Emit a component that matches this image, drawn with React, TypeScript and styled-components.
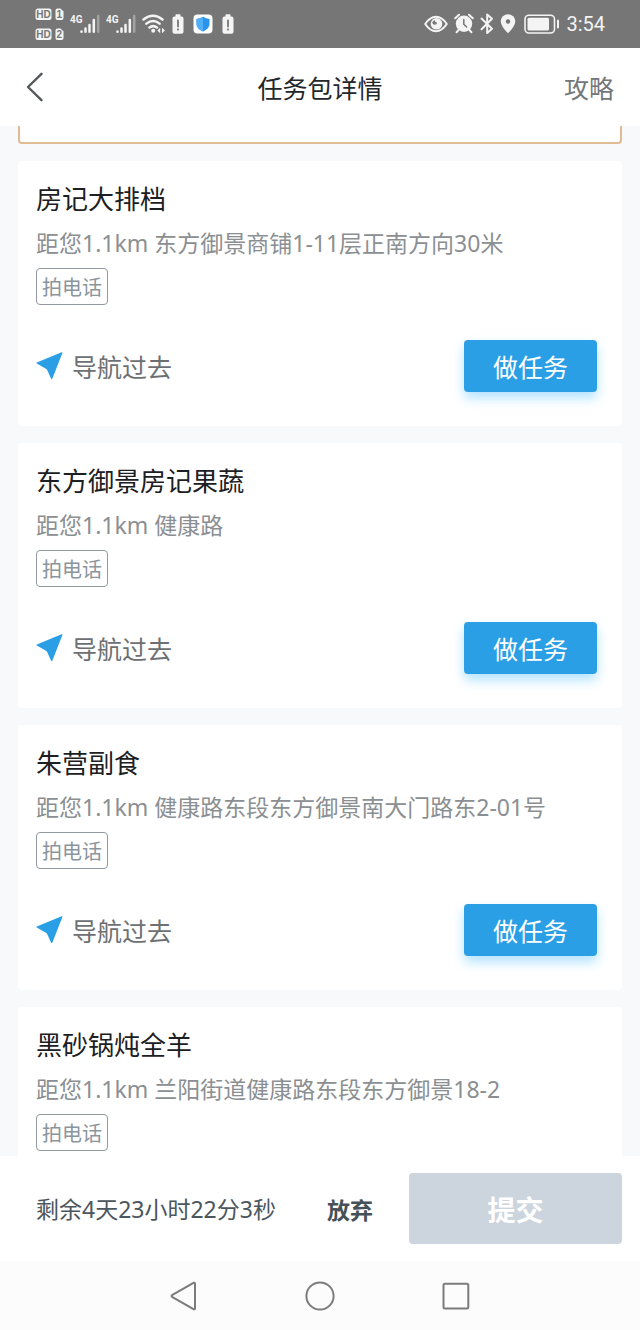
import React from "react";
import styled, { createGlobalStyle } from "styled-components";

const GlobalStyle = createGlobalStyle`
  *, *::before, *::after { box-sizing: border-box; }
  body {
    margin: 0;
    background: #f7f9fb;
    font-family: "Noto Sans CJK SC", sans-serif;
  }
  button {
    margin: 0;
    padding: 0;
    border: 0;
    background: none;
    font-family: inherit;
    cursor: pointer;
  }
  h1, h2, p { margin: 0; font-weight: 400; }
`;

const Screen = styled.div`
  display: flex;
  flex-direction: column;
  height: 100vh;
  background: #f7f9fb;
`;

const StatusBar = styled.div`
  display: flex;
  justify-content: space-between;
  flex: none;
  height: 48px;
  padding: 0 35px;
  background: #767676;
  color: #f4f4f4;
`;

const StatusGroup = styled.div`
  display: flex;
  align-items: center;
  gap: 6px;
`;

const Clock = styled.time`
  font-family: Roboto, sans-serif;
  font-size: 20px;
  line-height: 24px;
`;

const Header = styled.header`
  display: grid;
  grid-template-columns: 1fr auto 1fr;
  align-items: center;
  flex: none;
  height: 78px;
  padding: 0 26px;
  background: #fff;
`;

const BackButton = styled.button`
  display: flex;
  justify-self: start;
`;

const PageTitle = styled.h1`
  font-size: 25px;
  line-height: 36px;
  color: #23272a;
`;

const GuideLink = styled.a`
  justify-self: end;
  font-size: 25px;
  line-height: 36px;
  color: #73777a;
  text-decoration: none;
`;

const TaskList = styled.main`
  display: flex;
  flex-direction: column;
  gap: 17px;
  flex: 1;
  min-height: 0;
  padding: 0 18px;
  overflow-y: auto;
  scrollbar-width: none;
`;

const PackageSummary = styled.div`
  flex: none;
  height: 18px;
  border: 2px solid #dfbc93;
  border-top: 0;
  border-radius: 0 0 4px 4px;
  background: #fff;
`;

const Card = styled.article`
  display: flex;
  flex-direction: column;
  align-items: flex-start;
  flex: none;
  min-height: 265px;
  padding: 19px 25px 34px 18px;
  border-radius: 4px;
  background: #fff;
`;

const ShopName = styled.h2`
  font-size: 26px;
  line-height: 36px;
  color: #1c2023;
`;

const Address = styled.p`
  margin-top: 12px;
  font-family: "Noto Sans", "Noto Sans CJK SC", sans-serif;
  font-size: 23px;
  line-height: 30px;
  color: #8b8f92;
`;

const Tag = styled.span`
  margin-top: 10px;
  padding: 0 5px;
  border: 1px solid #9299a0;
  border-radius: 4px;
  font-size: 20px;
  line-height: 35px;
  color: #8a959d;
`;

const Actions = styled.div`
  display: flex;
  justify-content: space-between;
  align-items: center;
  align-self: stretch;
  margin-top: 35px;
`;

const NavigateButton = styled.button`
  display: flex;
  align-items: center;
  gap: 9px;
  font-size: 25px;
  line-height: 36px;
  color: #6d7073;
`;

const DoTaskButton = styled.button`
  height: 52px;
  padding: 0 29px;
  border-radius: 4px;
  background: #2a9fe5;
  box-shadow: 0 6px 12px rgba(60, 185, 255, 0.4);
  font-size: 25px;
  line-height: 36px;
  color: #fff;
`;

const Footer = styled.footer`
  display: flex;
  align-items: center;
  flex: none;
  height: 105px;
  padding: 0 18px 0 36px;
  background: #fff;
`;

const Remaining = styled.p`
  flex: 1;
  font-family: "Noto Sans", "Noto Sans CJK SC", sans-serif;
  font-size: 23px;
  line-height: 30px;
  color: #4c565d;
`;

const GiveUpButton = styled.button`
  margin-right: 36px;
  font-size: 23px;
  font-weight: 700;
  line-height: 30px;
  color: #455058;
`;

const SubmitButton = styled.button`
  width: 213px;
  height: 71px;
  border-radius: 4px;
  background: #ccd4dd;
  font-size: 28px;
  font-weight: 700;
  line-height: 36px;
  color: #fff;
`;

const SystemNav = styled.nav`
  display: flex;
  justify-content: center;
  align-items: center;
  gap: 106px;
  flex: none;
  height: 69px;
  background: #fcfcfc;
`;

const SystemButton = styled.button`
  display: flex;
`;

const BAR = "#767676";
const INK = "#f4f4f4";

const DualSimIcon = () => (
  <svg width="29" height="32" viewBox="0 0 29 32">
    {["1", "2"].map((sim, i) => (
      <g key={sim} transform={`translate(0 ${i * 20})`}>
        <rect x="0.5" y="0.5" width="16" height="11.5" rx="2.5" fill={INK} />
        <text x="8.5" y="9.8" textAnchor="middle" fontFamily="Liberation Sans" fontWeight="700" fontSize="10" fill={BAR}>
          HD
        </text>
        <path d="M20.5 2.5q0-2 2-2h3l3 3v6.500q0 2-2 2h-4q-2 0-2-2z" fill={INK} />
        <text x="24.400" y="9.8" textAnchor="middle" fontFamily="Liberation Sans" fontWeight="700" fontSize="10" fill={BAR}>
          {sim}
        </text>
      </g>
    ))}
  </svg>
);

const SignalIcon = () => (
  <svg width="30" height="32" viewBox="0 0 30 32">
    <text x="0" y="14.500" fontFamily="Liberation Sans Narrow, Roboto" fontWeight="700" fontSize="10" fill={INK}>
      4G
    </text>
    <g strokeWidth="2.500" strokeLinecap="round" stroke={INK}>
      <path d="M11.500 23.500v0.200M15.500 20.500v3.200M19.500 17v6.700M23.800 12v11.700" />
      <path d="M28.200 8v15.700" stroke="#a2a2a2" />
    </g>
  </svg>
);

const WifiIcon = () => (
  <svg width="24" height="32" viewBox="0 0 24 32" fill="none" stroke={INK} strokeWidth="2.500" strokeLinecap="round">
    <path d="M1.500 11.500q9.500-7.600 19 0M4.400 15.600q6.600-5.300 13.200 0M7.500 19.500q3.700-2.800 7.400 0" />
    <circle cx="11.200" cy="22.800" r="2" fill={INK} stroke="none" />
    <path d="M18.200 19.800v5.400l-2.900-2.700zM20 19.800v5.400l2.900-2.700z" fill={INK} stroke="none" />
  </svg>
);

const BatteryAlertIcon = () => (
  <svg width="12" height="32" viewBox="0 0 12 32">
    <rect x="3.500" y="6.300" width="5" height="3" rx="0.500" fill={INK} />
    <rect x="0.500" y="8.500" width="11" height="17.300" rx="2" fill={INK} />
    <path d="M6 12.500v6" stroke={BAR} strokeWidth="1.800" strokeLinecap="round" />
    <circle cx="6" cy="21.500" r="1.100" fill={BAR} />
  </svg>
);

const ShieldIcon = () => (
  <svg width="26" height="32" viewBox="-3 0 26 32">
    <rect x="0.500" y="6.500" width="19" height="19" rx="4" fill="#fff" />
    <path d="M10 8.800q3 2 6.500 2.200v5.200q0 4.600-6.500 7.200q-6.500-2.600-6.500-7.200v-5.200q3.500-.2 6.500-2.200z" fill="#2c93ef" />
    <path d="M10 8.800q-3 2-6.500 2.200v5.200q0 4.600 6.500 7.200z" fill="#4fb0f8" />
  </svg>
);

const EyeIcon = () => (
  <svg width="24" height="32" viewBox="0 0 24 32">
    <path d="M1.200 16Q6 8.800 12 8.800T22.800 16Q18 23.200 12 23.200T1.200 16z" fill="none" stroke={INK} strokeWidth="2" strokeLinejoin="round" />
    <circle cx="12.500" cy="15.800" r="5.800" fill={INK} />
    <path d="M8.200 14.500q.8-1.800 2.600-2.300q.2 2.600 2.400 2.600q-.5 2-2.400 2q-2 0-2.600-2.300z" fill={BAR} />
  </svg>
);

const AlarmIcon = () => (
  <svg width="20" height="32" viewBox="0 0 20 32" strokeLinecap="round">
    <circle cx="10" cy="15.800" r="8.200" fill={INK} />
    <path d="M1.200 10.200l3.800-3.500M18.800 10.200l-3.800-3.500M4.500 22l-2 2.300M15.500 22l2 2.300" stroke={INK} strokeWidth="2" />
    <path d="M9.800 11.500v4.700l2.800 2.800" fill="none" stroke={BAR} strokeWidth="1.500" />
  </svg>
);

const BluetoothIcon = () => (
  <svg width="14" height="32" viewBox="0 0 14 32" fill="none" stroke={INK} strokeWidth="2" strokeLinejoin="round" strokeLinecap="round">
    <path d="M1.500 10.500L12 20.800L7.200 25V6.500L12 10.700L1.500 21.300" />
  </svg>
);

const PinIcon = () => (
  <svg width="18" height="32" viewBox="0 0 18 32">
    <path d="M8 25.200Q0.800 18 0.800 13.400a7.200 7.200 0 0 1 14.400 0Q15.200 18 8 25.200z" fill={INK} />
    <circle cx="8" cy="13.500" r="2.200" fill={BAR} />
  </svg>
);

const BatteryIcon = () => (
  <svg width="36" height="32" viewBox="0 0 36 32">
    <rect x="1" y="7.200" width="29.500" height="17.800" rx="4" fill="none" stroke={INK} strokeWidth="1.600" />
    <rect x="3.500" y="9.700" width="21.500" height="12.800" rx="1.500" fill={INK} />
    <path d="M34 12.500v7" stroke={INK} strokeWidth="2" strokeLinecap="round" />
  </svg>
);

const ArrowIcon = () => (
  <svg width="27" height="28" viewBox="0 0 27 28">
    <path d="M0.800 10.400L25.600 0.200Q26.800 0 26.400 1.100L16.400 26.600Q15.600 27.800 15 26.600L11.400 18.400Q10.800 17.100 9.500 16.400L0.800 11.600Q0 11 0.800 10.400z" fill="#2a9fe5" />
  </svg>
);

type Shop = { name: string; address: string; actionable: boolean };

const shops: Shop[] = [
  { name: "房记大排档", address: "距您1.1km 东方御景商铺1-11层正南方向30米", actionable: true },
  { name: "东方御景房记果蔬", address: "距您1.1km 健康路", actionable: true },
  { name: "朱营副食", address: "距您1.1km 健康路东段东方御景南大门路东2-01号", actionable: true },
  { name: "黑砂锅炖全羊", address: "距您1.1km 兰阳街道健康路东段东方御景18-2", actionable: false },
];

const ShopCard = ({ name, address, actionable }: Shop) => (
  <Card>
    <ShopName>{name}</ShopName>
    <Address>{address}</Address>
    <Tag>拍电话</Tag>
    {actionable && (
      <Actions>
        <NavigateButton type="button">
          <ArrowIcon />
          导航过去
        </NavigateButton>
        <DoTaskButton type="button">做任务</DoTaskButton>
      </Actions>
    )}
  </Card>
);

export default function App() {
  return (
    <>
      <GlobalStyle />
      <Screen>
        <StatusBar>
          <StatusGroup>
            <DualSimIcon />
            <SignalIcon />
            <SignalIcon />
            <WifiIcon />
            <BatteryAlertIcon />
            <ShieldIcon />
            <BatteryAlertIcon />
          </StatusGroup>
          <StatusGroup>
            <EyeIcon />
            <AlarmIcon />
            <BluetoothIcon />
            <PinIcon />
            <BatteryIcon />
            <Clock>3:54</Clock>
          </StatusGroup>
        </StatusBar>

        <Header>
          <BackButton type="button" aria-label="返回">
            <svg width="18" height="30" viewBox="0 0 18 30" fill="none" stroke="#54585b" strokeWidth="2.400" strokeLinecap="round" strokeLinejoin="round">
              <path d="M15.500 1.800L2 15l13.500 13.200" />
            </svg>
          </BackButton>
          <PageTitle>任务包详情</PageTitle>
          <GuideLink href="#guide">攻略</GuideLink>
        </Header>

        <TaskList>
          <PackageSummary />
          {shops.map((shop) => (
            <ShopCard key={shop.name} {...shop} />
          ))}
        </TaskList>

        <Footer>
          <Remaining>剩余4天23小时22分3秒</Remaining>
          <GiveUpButton type="button">放弃</GiveUpButton>
          <SubmitButton type="button">提交</SubmitButton>
        </Footer>

        <SystemNav>
          <SystemButton type="button" aria-label="后退">
            <svg width="30" height="32" viewBox="0 0 30 32" fill="none" stroke="#7b7b7b" strokeWidth="2" strokeLinejoin="round">
              <path d="M3 15.200L24.500 2.800Q26 2.200 26 3.800V28.200Q26 29.800 24.500 29.200L3 16.800Q2 16 3 15.200z" />
            </svg>
          </SystemButton>
          <SystemButton type="button" aria-label="主屏幕">
            <svg width="30" height="32" viewBox="0 0 30 32" fill="none" stroke="#7b7b7b" strokeWidth="2">
              <circle cx="15" cy="16" r="13.600" />
            </svg>
          </SystemButton>
          <SystemButton type="button" aria-label="最近任务">
            <svg width="30" height="32" viewBox="0 0 30 32" fill="none" stroke="#7b7b7b" strokeWidth="2">
              <rect x="2.500" y="3.800" width="24.800" height="24.800" rx="1.500" />
            </svg>
          </SystemButton>
        </SystemNav>
      </Screen>
    </>
  );
}
